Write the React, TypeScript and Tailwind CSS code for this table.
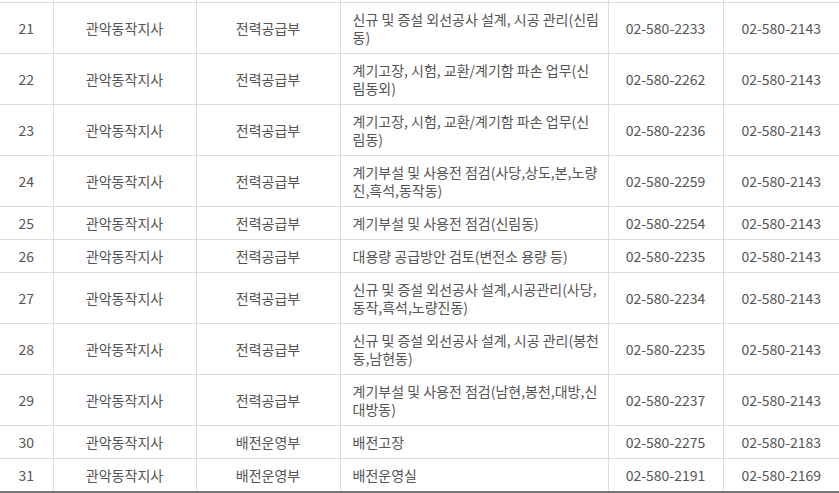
import React from "react";

type Row = [string, string, string, string, string, string];

const rows: Row[] = [
  ["21", "관악동작지사", "전력공급부", "신규 및 증설 외선공사 설계, 시공 관리(신림동)", "02-580-2233", "02-580-2143"],
  ["22", "관악동작지사", "전력공급부", "계기고장, 시험, 교환/계기함 파손 업무(신림동외)", "02-580-2262", "02-580-2143"],
  ["23", "관악동작지사", "전력공급부", "계기고장, 시험, 교환/계기함 파손 업무(신림동)", "02-580-2236", "02-580-2143"],
  ["24", "관악동작지사", "전력공급부", "계기부설 및 사용전 점검(사당,상도,본,노량진,흑석,동작동)", "02-580-2259", "02-580-2143"],
  ["25", "관악동작지사", "전력공급부", "계기부설 및 사용전 점검(신림동)", "02-580-2254", "02-580-2143"],
  ["26", "관악동작지사", "전력공급부", "대용량 공급방안 검토(변전소 용량 등)", "02-580-2235", "02-580-2143"],
  ["27", "관악동작지사", "전력공급부", "신규 및 증설 외선공사 설계,시공관리(사당,동작,흑석,노량진동)", "02-580-2234", "02-580-2143"],
  ["28", "관악동작지사", "전력공급부", "신규 및 증설 외선공사 설계, 시공 관리(봉천동,남현동)", "02-580-2235", "02-580-2143"],
  ["29", "관악동작지사", "전력공급부", "계기부설 및 사용전 점검(남현,봉천,대방,신대방동)", "02-580-2237", "02-580-2143"],
  ["30", "관악동작지사", "배전운영부", "배전고장", "02-580-2275", "02-580-2183"],
  ["31", "관악동작지사", "배전운영부", "배전운영실", "02-580-2191", "02-580-2169"],
];

const cell = "border border-[#dcdcdc] py-[7px] leading-[18px] align-middle";

export default function App() {
  return (
    <div
      className="w-[839px] h-[493px] overflow-hidden bg-white text-[#555] text-[14px]"
      style={{ fontFamily: '"Noto Sans CJK KR", "Noto Sans", sans-serif' }}
    >
      <table className="w-[839px] table-fixed border-collapse border-b-2 border-b-[#777]">
        <colgroup>
          <col className="w-[53px]" />
          <col className="w-[143px]" />
          <col className="w-[144px]" />
          <col className="w-[268px]" />
          <col className="w-[115px]" />
          <col className="w-[116px]" />
        </colgroup>
        <tbody>
          <tr className="h-[2px]">
            <td className="border-r border-[#dcdcdc] p-0 h-[2px]" />
            <td className="border-x border-[#dcdcdc] p-0 h-[2px]" />
            <td className="border-x border-[#dcdcdc] p-0 h-[2px]" />
            <td className="border-x border-[#dcdcdc] p-0 h-[2px]" />
            <td className="border-x border-[#dcdcdc] p-0 h-[2px]" />
            <td className="border-l border-[#dcdcdc] p-0 h-[2px]" />
          </tr>
          {rows.map((r) => (
            <tr key={r[0]}>
              <td className={`${cell} px-3 border-l-0 text-center`}>{r[0]}</td>
              <td className={`${cell} px-3 text-center`}>{r[1]}</td>
              <td className={`${cell} px-3 text-center`}>{r[2]}</td>
              <td className={`${cell} pl-3 pr-[6px] text-left`}>{r[3]}</td>
              <td className={`${cell} px-3 text-center`}>{r[4]}</td>
              <td className={`${cell} px-3 border-r-0 text-center`}>{r[5]}</td>
            </tr>
          ))}
        </tbody>
      </table>
    </div>
  );
}
